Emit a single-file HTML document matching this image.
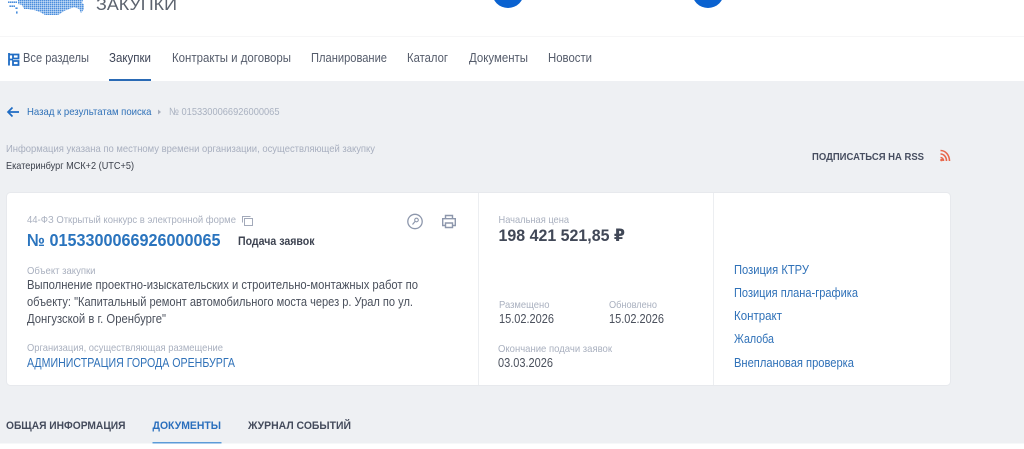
<!DOCTYPE html>
<html lang="ru"><head><meta charset="utf-8"><title>Закупки</title>
<style>
html,body{margin:0;padding:0;width:1024px;height:449px;overflow:hidden;background:#fff}
svg{display:block;filter:blur(.3px)}
text{font-family:"Liberation Sans","DejaVu Sans",sans-serif;font-size:11.5px}
.nav{fill:#555c6b;font-size:12.5px}
.lab{fill:#a9b0bf;font-size:10.5px}
.val{fill:#4a505c;font-size:12.5px}
.lnk{fill:#2f71b8;font-size:12.5px}
.tab{font-weight:bold;font-size:11px;fill:#444b5c}
</style></head><body>
<svg width="1024" height="449" viewBox="0 0 1024 449" xmlns="http://www.w3.org/2000/svg">
<defs>
<pattern id="d" width="2" height="2" patternUnits="userSpaceOnUse"><rect width="1.6" height="1.6" fill="#4b8edd"/></pattern>
</defs>
<rect width="1024" height="449" fill="#fff"/>
<!-- header -->
<path d="M8 1H17V3H8ZM9 5H15V7H9ZM15 7H18V9H15ZM16 11H18V14H16ZM18 0H83L82 3L84 4L84 9L81 13L79 9L74 7L69 9L64 11L58 15L45 15L40 12L34 10L28 9L24 9L22 5L18 4Z" fill="url(#d)"/>
<text x="96" y="10" textLength="81" lengthAdjust="spacingAndGlyphs" style="font-size:17px" fill="#5b626e">ЗАКУПКИ</text>
<circle cx="508" cy="-8" r="16" fill="#0a62d0"/>
<circle cx="708" cy="-8" r="16" fill="#0a62d0"/>
<rect y="36" width="1024" height="1" fill="#f6f6f7"/>
<!-- nav -->
<g fill="none" stroke="#1f6cc4" stroke-width="1.800"><path d="M9 53V65.500M9 54.500H18.500V58.500H13V54.500M13 61H18.500V65H13ZM9 59.500H13"/></g>
<text class="nav" x="23" y="62" textLength="66" lengthAdjust="spacingAndGlyphs">Все разделы</text>
<text class="nav" x="109" y="62" textLength="42" lengthAdjust="spacingAndGlyphs" style="fill:#3f4658">Закупки</text>
<text class="nav" x="172" y="62" textLength="119" lengthAdjust="spacingAndGlyphs">Контракты и договоры</text>
<text class="nav" x="311" y="62" textLength="76" lengthAdjust="spacingAndGlyphs">Планирование</text>
<text class="nav" x="407" y="62" textLength="41" lengthAdjust="spacingAndGlyphs">Каталог</text>
<text class="nav" x="469" y="62" textLength="59" lengthAdjust="spacingAndGlyphs">Документы</text>
<text class="nav" x="548" y="62" textLength="44" lengthAdjust="spacingAndGlyphs">Новости</text>
<!-- gray -->
<rect y="81" width="1024" height="362.500" fill="#eef0f3"/>
<rect x="109" y="79" width="42" height="2" fill="#2a6ab5"/>
<!-- breadcrumb -->
<path d="M19 112H8M12.500 107.500L8 112L12.500 116.500" fill="none" stroke="#1f6cc4" stroke-width="1.700"/>
<text x="27" y="115" textLength="124.500" lengthAdjust="spacingAndGlyphs" style="font-size:10.500px" fill="#2f71b8">Назад к результатам поиска</text>
<path d="M158 109.500L161 112L158 114.500Z" fill="#a5aebd"/>
<text x="169" y="115" textLength="110.500" lengthAdjust="spacingAndGlyphs" style="font-size:10.500px" fill="#a9b1c0">№ 0153300066926000065</text>
<!-- info -->
<text x="6" y="152" textLength="369" lengthAdjust="spacingAndGlyphs" style="font-size:10.500px" fill="#a8afbf">Информация указана по местному времени организации, осуществляющей закупку</text>
<text x="6" y="169" textLength="128" lengthAdjust="spacingAndGlyphs" style="font-size:10.500px" fill="#3a3f4a">Екатеринбург МСК+2 (UTC+5)</text>
<text x="812" y="160" textLength="112" lengthAdjust="spacingAndGlyphs" style="font-size:10.500px;font-weight:bold" fill="#474e60">ПОДПИСАТЬСЯ НА RSS</text>
<g fill="none" stroke="#e8664a" stroke-width="1.600"><path d="M940.500 150.500C945.500 150.500 949.500 155 949.500 161"/><path d="M940.500 154C944 154 946.500 157 946.500 161"/><path d="M940.500 157.500C942.300 157.500 943.500 159 943.500 161"/></g>
<circle cx="941.500" cy="160" r="1.300" fill="#e8664a"/>
<!-- card -->
<rect x="6.500" y="192.500" width="944" height="193" rx="4" fill="#fff" stroke="#e7e9ed"/>
<rect x="478" y="193" width="1" height="192" fill="#eceef1"/>
<rect x="713" y="193" width="1" height="192" fill="#eceef1"/>
<text x="27" y="223" textLength="209" lengthAdjust="spacingAndGlyphs" style="font-size:10.500px" fill="#a9b0bf">44-ФЗ Открытый конкурс в электронной форме</text>
<g fill="none" stroke="#a3aaba" stroke-width="1"><path d="M244.500 218.500V225.500H252.500V218.500Z"/><path d="M242.500 222.500V216.500H250.500"/></g>
<text x="27" y="246" textLength="193.500" lengthAdjust="spacingAndGlyphs" style="font-size:17.500px;font-weight:bold" fill="#2a74be">№ 0153300066926000065</text>
<text x="238" y="245" textLength="76.500" lengthAdjust="spacingAndGlyphs" style="font-size:11.500px;font-weight:bold" fill="#3d4351">Подача заявок</text>
<circle cx="415" cy="221.500" r="7.200" fill="none" stroke="#8d97ac" stroke-width="1.300"/>
<circle cx="416.500" cy="220" r="1.800" fill="none" stroke="#8d97ac" stroke-width="1.100"/>
<path d="M415 221.500L412.500 224.500" stroke="#8d97ac" stroke-width="1.200" fill="none"/>
<g fill="none" stroke="#8d97ac" stroke-width="1.400"><path d="M445.500 218.500V215.500H452.500V218.500"/><path d="M445.500 225.500H442.700V218.700H455.300V225.500H452.500"/><path d="M445.500 223V227.500H452.500V223Z"/></g>
<text class="lab" x="27" y="274" textLength="68.500" lengthAdjust="spacingAndGlyphs">Объект закупки</text>
<text class="val" x="27" y="289" textLength="391" lengthAdjust="spacingAndGlyphs">Выполнение проектно-изыскательских и строительно-монтажных работ по</text>
<text class="val" x="27" y="306" textLength="386" lengthAdjust="spacingAndGlyphs">объекту: "Капитальный ремонт автомобильного моста через р. Урал по ул.</text>
<text class="val" x="27" y="323" textLength="139" lengthAdjust="spacingAndGlyphs">Донгузской в г. Оренбурге"</text>
<text class="lab" x="27" y="351" textLength="196" lengthAdjust="spacingAndGlyphs">Организация, осуществляющая размещение</text>
<text class="lnk" x="27" y="367" textLength="208" lengthAdjust="spacingAndGlyphs">АДМИНИСТРАЦИЯ ГОРОДА ОРЕНБУРГА</text>
<!-- middle column -->
<text class="lab" x="498.500" y="223" textLength="70.500" lengthAdjust="spacingAndGlyphs">Начальная цена</text>
<text x="498.500" y="241" textLength="126.500" lengthAdjust="spacingAndGlyphs" style="font-size:16.500px;font-weight:bold" fill="#414857">198 421 521,85 ₽</text>
<text class="lab" x="499" y="308" textLength="50.500" lengthAdjust="spacingAndGlyphs">Размещено</text>
<text class="lab" x="609" y="308" textLength="48" lengthAdjust="spacingAndGlyphs">Обновлено</text>
<text class="val" x="499" y="323" textLength="55" lengthAdjust="spacingAndGlyphs">15.02.2026</text>
<text class="val" x="609" y="323" textLength="55" lengthAdjust="spacingAndGlyphs">15.02.2026</text>
<text class="lab" x="498" y="352" textLength="114" lengthAdjust="spacingAndGlyphs">Окончание подачи заявок</text>
<text class="val" x="498" y="367" textLength="55" lengthAdjust="spacingAndGlyphs">03.03.2026</text>
<!-- links -->
<text class="lnk" x="734" y="274" textLength="75" lengthAdjust="spacingAndGlyphs">Позиция КТРУ</text>
<text class="lnk" x="734" y="297" textLength="124" lengthAdjust="spacingAndGlyphs">Позиция плана-графика</text>
<text class="lnk" x="734" y="320" textLength="48" lengthAdjust="spacingAndGlyphs">Контракт</text>
<text class="lnk" x="734" y="343" textLength="40" lengthAdjust="spacingAndGlyphs">Жалоба</text>
<text class="lnk" x="734" y="367" textLength="120" lengthAdjust="spacingAndGlyphs">Внеплановая проверка</text>
<!-- tabs -->
<text class="tab" x="6" y="429" textLength="119.500" lengthAdjust="spacingAndGlyphs">ОБЩАЯ ИНФОРМАЦИЯ</text>
<text class="tab" x="152.500" y="429" textLength="68.500" lengthAdjust="spacingAndGlyphs" style="fill:#2a6fbd">ДОКУМЕНТЫ</text>
<text class="tab" x="248" y="429" textLength="103" lengthAdjust="spacingAndGlyphs">ЖУРНАЛ СОБЫТИЙ</text>
<rect x="152.500" y="442" width="69" height="1.500" fill="#5b9bd8"/>
</svg>
</body></html>
